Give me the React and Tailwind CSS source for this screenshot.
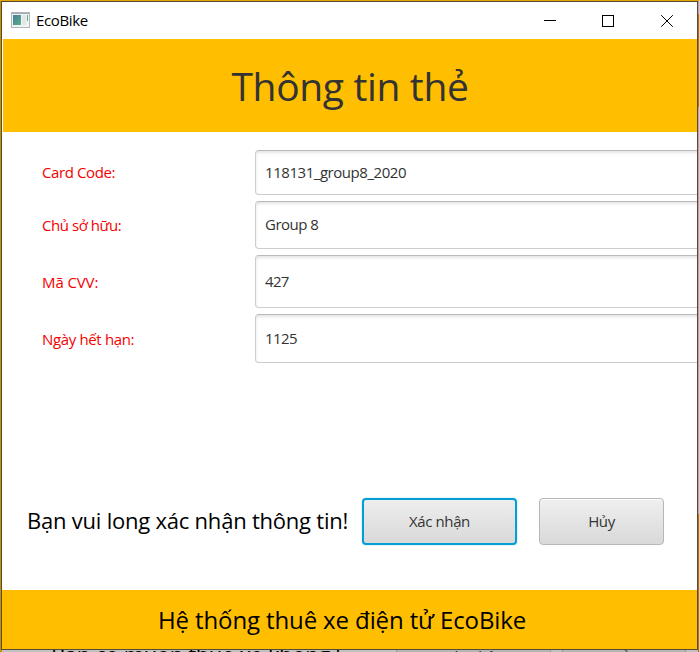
const fields = [
  { label: "Card Code:", value: "118131_group8_2020", row: "h-[45px]", labelGap: "pb-px tracking-[-0.4px]", gap: "pb-px tracking-[-0.45px]" },
  { label: "Chủ sở hữu:", value: "Group 8", row: "h-12", labelGap: "tracking-[-0.45px]", gap: "pb-[3px] tracking-[-0.5px]" },
  { label: "Mã CVV:", value: "427", row: "h-[53px]", labelGap: "tracking-[-0.1px]", gap: "pb-px tracking-[-0.7px]" },
  { label: "Ngày hết hạn:", value: "1125", row: "h-[49px]", labelGap: "tracking-[-0.35px]", gap: "pb-px tracking-[-0.6px]" },
];

function TitleBar() {
  return (
    <header className="flex h-[37px] shrink-0 items-center bg-white pl-[9px] text-black">
      <svg width="20" height="16" viewBox="0 0 20 16" className="mt-[-1px] shrink-0">
        <defs>
          <linearGradient id="screen" x1="0" y1="0" x2="1" y2="1">
            <stop offset="0" stopColor="#447d9c" />
            <stop offset="1" stopColor="#5eb083" />
          </linearGradient>
        </defs>
        <rect x="0.5" y="0.5" width="18" height="15" fill="#f1f3f4" stroke="#b2b6bd" />
        <path d="M1 1.5H18" stroke="#a2a8b4" />
        <rect x="2" y="3" width="8" height="10" fill="url(#screen)" />
        <rect x="11" y="3" width="4" height="10" fill="#e4e7e9" />
        <path d="M16.5 3V9" stroke="#65a78c" />
      </svg>
      <span className="ml-[5px] grow pb-0.5 text-[15px] leading-5 tracking-[-0.35px]">EcoBike</span>
      <svg width="12" height="12" viewBox="0 0 12 12" stroke="#000" fill="none" shapeRendering="crispEdges">
        <path d="M0 5.5H12" />
      </svg>
      <svg className="ml-[46px]" width="12" height="12" viewBox="0 0 12 12" stroke="#000" fill="none" shapeRendering="crispEdges">
        <rect x="0.5" y="0.5" width="11" height="11" />
      </svg>
      <svg className="mr-[24px] ml-[47px]" width="12" height="12" viewBox="0 0 12 12" stroke="#000" fill="none">
        <path d="M0.2 0.2L11.8 11.8M11.8 0.2L0.2 11.8" />
      </svg>
    </header>
  );
}

export default function App() {
  return (
    <div className="flex h-[652px] w-[699px] flex-col overflow-hidden bg-[#c39100] font-['Open_Sans','Noto_Sans',sans-serif]">
      <div className="h-px shrink-0 bg-[#dfa600]" />
      <div className="flex h-[649px] shrink-0">
        <div className="w-px bg-[#c39100]" />
        <main className="flex w-[697px] flex-col overflow-hidden border border-[#574b34] bg-white">
          <TitleBar />
          <h1 className="ml-px flex h-[93px] shrink-0 items-center justify-center bg-[#ffbe00] pt-px text-[39px] font-normal text-[#333]">
            <span className="tracking-[-0.35px]">Thông tin thẻ</span>
          </h1>
          <form className="mt-[18px] flex flex-col gap-[6px]">
            {fields.map((f) => (
              <div key={f.label} className={`flex items-center ${f.row}`}>
                <span className={`ml-10 w-[213px] shrink-0 text-[15px] leading-5 text-[#f50000] ${f.labelGap}`}>{f.label}</span>
                <div className={`flex h-full w-[460px] shrink-0 items-center rounded-[4px] border border-[#cdcdcd] border-t-[#bababa] bg-white pl-[9px] text-[15px] leading-5 text-[#333] shadow-[inset_0_2px_3px_#e6e6e6] ${f.gap}`}>
                  {f.value}
                </div>
              </div>
            ))}
          </form>
          <div className="mt-[135px] flex h-[47px] shrink-0 items-center">
            <p className="ml-[25px] w-[335px] shrink-0 pb-0.5 text-[22px] whitespace-nowrap text-black tracking-[-0.22px]">
              Bạn vui long xác nhận thông tin!
            </p>
            <button className="h-[47px] w-[155px] shrink-0 rounded-[4px] border-2 border-[#039ed3] bg-linear-to-b from-[#eee] to-[#d9d9d9] text-[15px] tracking-[-0.4px] text-[#333] shadow-[0_0_2px_#a5d9ea]">
              Xác nhận
            </button>
            <button className="ml-[22px] h-[47px] w-[125px] shrink-0 rounded-[4px] border border-[#b7b7b7] bg-linear-to-b from-[#efefef] to-[#d9d9d9] text-[15px] tracking-[-0.4px] text-[#333] shadow-[inset_0_1px_0_#fff]">
              Hủy
            </button>
          </div>
          <footer className="mt-auto flex h-[59px] shrink-0 items-center bg-[#ffbe00] pl-[156px] text-[24px] text-black">
            <span className="whitespace-nowrap tracking-[-0.12px]">Hệ thống thuê xe điện tử EcoBike</span>
          </footer>
        </main>
        <div className="flex w-px flex-col">
          <div className="h-[13px] bg-[#aaa]" />
          <div className="h-[93px] bg-[#a47b00]" />
          <div className="grow bg-[#aaa]" />
          <div className="h-[136px] bg-[#a47b00]" />
        </div>
      </div>
      <div className="flex h-[2px] shrink-0 items-start overflow-hidden bg-[#c1c1c1] text-black">
        <div className="h-[2px] w-[2px] shrink-0 bg-[#c39100]" />
        <span className="-mt-[12px] ml-[49px] w-[345px] shrink-0 text-[22px] whitespace-nowrap tracking-[-0.35px]">Bạn có muốn thuê xe không?</span>
        <div className="flex h-[2px] w-[155px] shrink-0 justify-center border-x border-[#999] bg-[#b5b5b5] text-[15px] tracking-[-0.4px] text-[#333]">
          <span className="-mt-[5px]">Xác nhận</span>
        </div>
        <div className="ml-[11px] flex h-[2px] w-[124px] shrink-0 justify-center border-x border-[#999] bg-[#b5b5b5] text-[15px] tracking-[-0.4px] text-[#333]">
          <span className="-mt-[5px]">Hủy</span>
        </div>
        <div className="ml-auto h-[2px] w-px bg-[#a47b00]" />
      </div>
    </div>
  );
}
